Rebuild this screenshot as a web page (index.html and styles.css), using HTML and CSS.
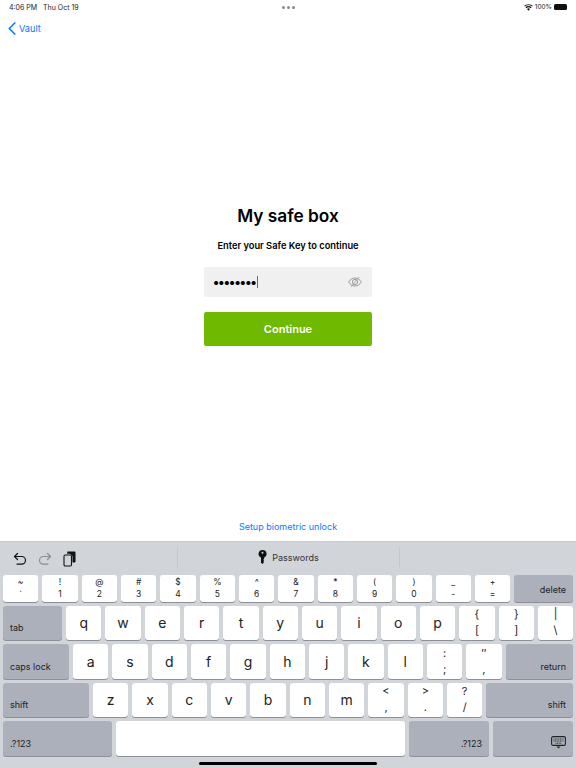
FILE: index.html
```html
<!doctype html>
<html lang="en">
<head>
  <meta charset="UTF-8">
  <title>My safe box</title>
  <link rel="stylesheet" href="styles.css">
</head>
<body>
  <div class="screen">
    <div class="status">
      <div class="status-left"><span>4:06 PM</span><span>Thu Oct 19</span></div>
      <div class="status-dots"><i></i><i></i><i></i></div>
      <div class="status-right">
        <svg width="9" height="7" viewBox="0 0 11 9"><path d="M5.5 8.6 3.6 6.4a2.9 2.9 0 0 1 3.8 0zM2.7 5.4 1.6 4.2a6 6 0 0 1 7.8 0L8.3 5.4a4.3 4.3 0 0 0-5.6 0zM.8 3.3 0 2.4a8.3 8.3 0 0 1 11 0l-.8.9a7.1 7.1 0 0 0-9.4 0z" fill="#111"/></svg>
        <span>100%</span>
        <div class="battery"></div>
      </div>
    </div>

    <div class="nav">
      <a class="back">
        <svg width="8" height="13" viewBox="0 0 8 13"><path d="M6.8 1 1.3 6.5l5.5 5.5" fill="none" stroke="#0a7aff" stroke-width="1.7" stroke-linecap="round" stroke-linejoin="round"/></svg>
        <span>Vault</span>
      </a>
    </div>

    <div class="main">
      <h1 class="title">My safe box</h1>
      <p class="subtitle">Enter your Safe Key to continue</p>
      <div class="field">
        <span class="dots">••••••••</span><span class="caret"></span>
        <svg class="eye" width="14" height="12" viewBox="0 0 14 12"><path d="M.7 6C2.3 3.4 4.5 2 7 2s4.7 1.4 6.3 4C11.7 8.6 9.5 10 7 10S2.3 8.6.7 6z" fill="none" stroke="#9a9a9a" stroke-width="1"/><circle cx="7" cy="6" r="2.6" fill="none" stroke="#9a9a9a" stroke-width="1"/><path d="M3 11 11 1" stroke="#9a9a9a" stroke-width=".8"/></svg>
      </div>
      <button class="continue">Continue</button>
    </div>

    <a class="biometric">Setup biometric unlock</a>

    <div class="keyboard">
      <div class="toolbar">
        <div class="tools">
          <svg width="14" height="14" viewBox="0 0 14 14"><path d="M4.5 1.5l-3 3 3 3M1.7 4.5h7a3.8 3.8 0 0 1 0 7.6H4" fill="none" stroke="#111" stroke-width="1.2" stroke-linecap="round" stroke-linejoin="round"/></svg>
          <svg width="14" height="14" viewBox="0 0 14 14"><path d="M9.5 1.500l3 3-3 3M12.300 4.500h-7a3.800 3.800 0 0 0 0 7.600H10" fill="none" stroke="#8a8d92" stroke-width="1.2" stroke-linecap="round" stroke-linejoin="round"/></svg>
          <svg width="13" height="16" viewBox="0 0 13 16"><path d="M4.500.5h7a1 1 0 0 1 1 1v9a1 1 0 0 1-1 1h-2V5L7 2.800H4z" fill="#111"/><rect x="1" y="4" width="7.500" height="11" rx="1.200" fill="none" stroke="#111" stroke-width="1.100"/></svg>
        </div>
        <div class="passwords">
          <svg width="9" height="14" viewBox="0 0 9 14"><path d="M4.500 0a4 4 0 0 1 1.600 7.700V9l-.8.7.8.8-.8.800.8.800L4.500 14 3 12.700V7.700A4 4 0 0 1 4.500 0z" fill="#111"/><circle cx="4.500" cy="2.700" r="1" fill="#d1d4d9"/></svg>
          <span>Passwords</span>
        </div>
      </div>

      <div class="keys">
        <div class="row">
          <div class="key two"><span>~</span><span>`</span></div>
          <div class="key two"><span>!</span><span>1</span></div>
          <div class="key two"><span>@</span><span>2</span></div>
          <div class="key two"><span>#</span><span>3</span></div>
          <div class="key two"><span>$</span><span>4</span></div>
          <div class="key two"><span>%</span><span>5</span></div>
          <div class="key two"><span>^</span><span>6</span></div>
          <div class="key two"><span>&amp;</span><span>7</span></div>
          <div class="key two"><span>*</span><span>8</span></div>
          <div class="key two"><span>(</span><span>9</span></div>
          <div class="key two"><span>)</span><span>0</span></div>
          <div class="key two"><span>_</span><span>-</span></div>
          <div class="key two"><span>+</span><span>=</span></div>
          <div class="key dark right delete">delete</div>
        </div>
        <div class="row tall">
          <div class="key dark left w-tab">tab</div>
          <div class="key">q</div><div class="key">w</div><div class="key">e</div><div class="key">r</div><div class="key">t</div>
          <div class="key">y</div><div class="key">u</div><div class="key">i</div><div class="key">o</div><div class="key">p</div>
          <div class="key two big"><span>{</span><span>[</span></div>
          <div class="key two big"><span>}</span><span>]</span></div>
          <div class="key two big"><span>|</span><span>\</span></div>
        </div>
        <div class="row tall">
          <div class="key dark left w-caps">caps lock</div>
          <div class="key">a</div><div class="key">s</div><div class="key">d</div><div class="key">f</div><div class="key">g</div>
          <div class="key">h</div><div class="key">j</div><div class="key">k</div><div class="key">l</div>
          <div class="key two big"><span>:</span><span>;</span></div>
          <div class="key two big"><span>″</span><span>,</span></div>
          <div class="key dark right grow">return</div>
        </div>
        <div class="row tall">
          <div class="key dark left w-shift">shift</div>
          <div class="key">z</div><div class="key">x</div><div class="key">c</div><div class="key">v</div><div class="key">b</div>
          <div class="key">n</div><div class="key">m</div>
          <div class="key two big"><span>&lt;</span><span>,</span></div>
          <div class="key two big"><span>&gt;</span><span>.</span></div>
          <div class="key two big"><span>?</span><span>/</span></div>
          <div class="key dark right grow">shift</div>
        </div>
        <div class="row tall">
          <div class="key dark left w-num">.?123</div>
          <div class="key grow"></div>
          <div class="key dark right w-num2">.?123</div>
          <div class="key dark right w-hide">
            <svg width="15" height="13" viewBox="0 0 15 13"><rect x=".6" y=".6" width="13.800" height="8.800" rx="1.500" fill="none" stroke="#222" stroke-width="1.100"/><path d="M2.500 3h10M2.500 5h10M4.500 7.200h6" stroke="#222" stroke-width="1" stroke-dasharray="1 .6"/><path d="M5.500 10.500 7.500 12.500l2-2z" fill="#222"/></svg>
          </div>
        </div>
      </div>
      <div class="home-bar"></div>
    </div>
  </div>
</body>
</html>
```

FILE: styles.css
```css
*{margin:0;padding:0;box-sizing:border-box;}
html,body{height:100%;}
body{font-family:"Inter","Liberation Sans",sans-serif;background:#fff;color:#000;overflow:hidden;}

.screen{width:576px;height:768px;display:flex;flex-direction:column;}

/* status bar */
.status{height:14px;padding:0 9px 0 9px;display:flex;align-items:center;justify-content:space-between;font-size:6.5px;color:#222;}
.status-left{display:flex;gap:6px;width:120px;font-size:7px;}
.status-dots{display:flex;gap:2px;}
.status-dots i{width:3px;height:3px;border-radius:50%;background:#8a8a8a;}
.status-right{width:120px;display:flex;align-items:center;justify-content:flex-end;gap:2px;}
.battery{width:13px;height:6px;border-radius:1.5px;background:#111;}

/* nav */
.nav{height:28px;padding:0 0 0 8px;display:flex;align-items:center;}
.back{display:flex;align-items:center;gap:3px;color:#0a7aff;font-size:9.2px;}

/* form */
.main{display:flex;flex-direction:column;align-items:center;flex:1;padding-top:163px;}
.title{font-size:17.3px;font-weight:600;line-height:22px;}
.subtitle{font-size:9.3px;font-weight:600;line-height:14px;margin-top:12px;}
.field{width:168px;height:30px;margin-top:14px;background:#f0f0f0;border-radius:2px;display:flex;align-items:center;padding:0 9px;position:relative;}
.dots{font-size:13px;font-weight:700;letter-spacing:-.8px;line-height:14px;}
.caret{width:1.5px;height:12px;background:#0a7aff;margin-left:1px;}
.eye{margin-left:auto;margin-right:1px;}
.continue{width:168px;height:34px;margin-top:15px;background:#6fb900;color:#fff;border:0;border-radius:2px;font:600 11px "Inter","Liberation Sans",sans-serif;}

.biometric{display:block;text-align:center;color:#0a7aff;font-size:9px;line-height:14px;margin-bottom:7px;}

/* keyboard */
.keyboard{height:227px;background:#d1d4d9;border-top:1px solid #c9ccd1;position:relative;}
.toolbar{height:33px;display:flex;align-items:center;position:relative;}
.tools{display:flex;align-items:center;gap:11px;padding-left:13px;}
.passwords{position:absolute;left:177px;top:5px;width:223px;height:20px;border-left:1px solid #c3c6cb;border-right:1px solid #c3c6cb;display:flex;align-items:center;justify-content:center;gap:5px;font-size:9px;color:#333;}

.keys{display:flex;flex-direction:column;gap:4px;padding:0 3px;}
.row{display:flex;gap:4px;height:26.5px;}
.row.tall{height:34.5px;}
.key{width:35.33px;flex:none;background:#fff;border-radius:3px;box-shadow:0 1px 0 #8d9096;display:flex;align-items:center;justify-content:center;font-size:14px;color:#222;}
.key.grow{flex:1;}
.two{flex-direction:column;font-size:8.5px;gap:3px;line-height:9px;}
.two.big{font-size:11px;gap:5px;line-height:11px;}
.dark{background:#abb0ba;font-size:9px;color:#222;padding:0 7px 7px;align-items:flex-end;}
.left{justify-content:flex-start;}
.right{justify-content:flex-end;}
.delete{flex:1;align-items:center;padding:2px 7px 0;}
.w-tab{width:59px;}
.w-caps{width:66px;}
.w-shift{width:86px;}
.w-num{width:108.5px;}
.w-num2{width:80px;}
.w-hide{width:80px;}
.home-bar{position:absolute;left:199px;bottom:3px;width:178px;height:3px;border-radius:2px;background:#000;}
```
